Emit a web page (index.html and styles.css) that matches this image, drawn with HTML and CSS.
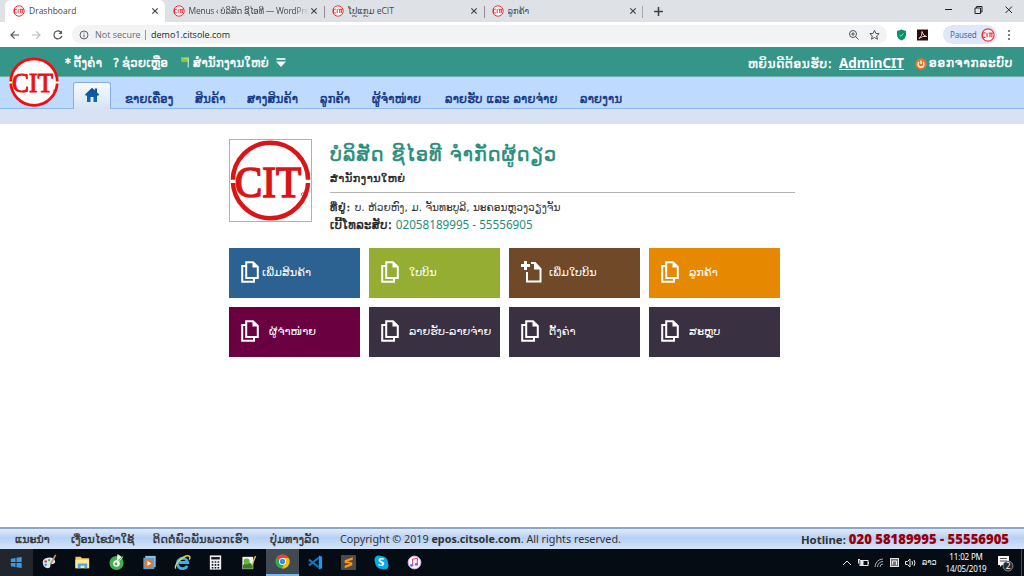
FILE: index.html
```html
<!DOCTYPE html>
<html lang="lo">
<head>
<meta charset="utf-8">
<title>Drashboard</title>
<link rel="stylesheet" href="styles.css">
</head>
<body>
<svg class="defs" width="0" height="0">
  <symbol id="cit" viewBox="0 0 100 100">
    <circle cx="50" cy="50" r="46.5" fill="#fff" stroke="currentColor" stroke-width="5.500"/>
    <path d="M0 51H100" stroke="#fff" stroke-width="4"/>
    <text x="6" y="70" textLength="82" lengthAdjust="spacingAndGlyphs" class="cit-text">CIT</text>
    <circle cx="90" cy="67" r="1.8" fill="none" stroke="currentColor"/>
  </symbol>
  <symbol id="fav" viewBox="0 0 12 12">
    <circle cx="6" cy="6" r="5.2" fill="#fff" stroke="#f03036" stroke-width="1"/>
    <path d="M3.9 4.2H1.5V8H3.9M5.2 4.2V8M6.5 4.3H10.7M7.7 4.3V8M9.3 4.3V8" fill="none" stroke="#f03036"/>
  </symbol>
  <symbol id="x" viewBox="0 0 8 8"><path d="M1.3 1.3L6.7 6.7M6.7 1.3L1.3 6.7" stroke="#42464b" stroke-width="1.2"/></symbol>
  <symbol id="pages" viewBox="0 0 18 22">
    <path d="M5.2 1.2H12L16.8 6V17H5.2Z" fill="none" stroke="#fff" stroke-width="2"/>
    <path d="M11.5 1V6.5H17Z" fill="#fff"/>
    <path d="M5 5H1.2V20.800H13V17" fill="none" stroke="#fff" stroke-width="2"/>
  </symbol>
  <symbol id="addpage" viewBox="0 0 22 22">
    <path d="M0 4.5H9M4.5 0V9" stroke="#fff" stroke-width="3"/>
    <path d="M6 11V20.5H19.5V8L14 2H10" fill="none" stroke="#fff" stroke-width="2"/>
    <path d="M13 1V8.5H20.5Z" fill="#fff"/>
  </symbol>
</svg>

<header class="tabs">
  <div class="tab active"><svg class="fav"><use href="#fav"/></svg><span>Drashboard</span><svg class="x"><use href="#x"/></svg></div>
  <div class="tab"><svg class="fav"><use href="#fav"/></svg><span class="fade">Menus ‹ ບໍລິສັດ ຊີໄອທີ — WordPres</span><svg class="x"><use href="#x"/></svg></div>
  <div class="tab sep"><svg class="fav"><use href="#fav"/></svg><span>ໂປຼແກຼມ eCIT</span><svg class="x"><use href="#x"/></svg></div>
  <div class="tab sep last"><svg class="fav"><use href="#fav"/></svg><span>ລູກຄ້າ</span><svg class="x"><use href="#x"/></svg></div>
  <svg class="plus" viewBox="0 0 10 10"><path d="M5 1V9M1 5H9" stroke="#3c4043" stroke-width="1.4"/></svg>
  <svg class="win" viewBox="0 0 70 12"><g fill="none" stroke="#222" stroke-width="1"><path d="M1 5.5H8M31 4H36.5V9.500H31ZM32.500 4V2.500H38V8H36.500M61.500 2.500L68 9M68 2.500L61.500 9"/></g></svg>
</header>

<div class="toolbar">
  <svg class="navicons" viewBox="0 0 60 14"><g fill="none" stroke-width="1.2"><path d="M9 7H1M4.700 3.300L1 7L4.700 10.700" stroke="#505458"/><path d="M22 7H30M26.300 3.300L30 7L26.300 10.700" stroke="#bcbfc3"/><path d="M51.200 4.500A4 4 0 1 0 51.800 8" stroke="#505458"/><path d="M52 2.500V6H48.500Z" fill="#505458"/></g></svg>
  <div class="omnibox">
    <svg class="info" viewBox="0 0 10 10"><circle cx="5" cy="5" r="4" fill="none" stroke="#5f6368"/><path d="M5 2.500V3.500M5 4.500V7.500" stroke="#5f6368"/></svg>
    <span class="notsecure">Not secure</span><i></i><span class="url">demo1.citsole.com</span>
    <svg class="omniicons" viewBox="0 0 34 12"><g fill="none" stroke="#505458" stroke-width="1"><circle cx="5" cy="5" r="3.500"/><path d="M7.600 7.600L10.500 10.500M3.200 5H6.800M5 3.200V6.800"/><path d="M26.500 1.300L27.900 4.400L31.200 4.700L28.700 6.900L29.500 10.200L26.500 8.500L23.500 10.200L24.300 6.900L21.800 4.700L25.100 4.400Z"/></g></svg>
  </div>
  <svg class="ext" viewBox="0 0 34 14"><path d="M6.500 1.500L11 3V7Q10.500 11 6.500 12.500Q2.500 11 2 7V3Z" fill="#0b8f6c"/><path d="M4.500 7L6 8.300L8.500 5.500" fill="none" stroke="#7fe8c6"/><rect x="22" y="1.500" width="11" height="11" fill="#2b0b0b"/><path d="M24 10.500Q27.500 8 27 3.500Q28 8 31.500 8.500Q28 7.500 24 10.500" fill="none" stroke="#f3dede" stroke-width=".9"/></svg>
  <div class="profile"><span>Paused</span><svg><use href="#fav"/></svg></div>
  <svg class="dots" viewBox="0 0 4 12"><g fill="#505458"><circle cx="2" cy="2" r="1"/><circle cx="2" cy="6" r="1"/><circle cx="2" cy="10" r="1"/></g></svg>
</div>

<div class="apphead">
  <div class="topbar">
    <div class="toplinks">
      <span class="t1">*&thinsp;ຕັ້ງຄ່າ</span>
      <span class="t2">?&thinsp;ຊ່ວຍເຫຼືອ</span>
      <svg class="flag" viewBox="0 0 10 14"><path d="M0 1H8V6H4L1 6Z" fill="#b8e04e"/><path d="M0 1L5 3L8 1V6H1Z" fill="#8fc93a"/><path d="M8 1V12" stroke="#d7e6df" stroke-width="1.200"/></svg>
      <span class="t3">ສໍານັກງານໃຫຍ່</span>
      <svg class="drop" viewBox="0 0 10 10"><path d="M.5 1H9.500" stroke="#fff" stroke-width="1.600"/><path d="M0 3.500H10L5 9Z" fill="#fff"/></svg>
    </div>
    <div class="user">
      <span class="welcome">ຫຍິນດີຕ້ອນຮັບ:</span><a>AdminCIT</a>
      <svg class="power" viewBox="0 0 12 12"><circle cx="6" cy="6" r="5.700" fill="#ee7424"/><path d="M4 4A3 3 0 1 0 8 4M6 2.500V6" fill="none" stroke="#fff" stroke-width="1.300"/></svg>
      <span class="logout">ອອກຈາກລະບົບ</span>
    </div>
  </div>
  <nav class="menu">
    <div class="home"><svg viewBox="0 0 16 16"><defs><linearGradient id="hg" x2="0" y2="1"><stop stop-color="#0a4d94"/><stop offset="1" stop-color="#1467b8"/></linearGradient></defs><path d="M1 7.500L8 .8L10.800 3.400V1.500H13V5.500L15.200 7.500L14 9L13 8.200V15H9.500V10H6.500V15H3V8.200L2 9Z" fill="url(#hg)"/></svg></div>
    <span class="m1">ຂາຍເຄື່ອງ</span><span class="m2">ສິນຄ້າ</span><span class="m3">ສາງສິນຄ້າ</span><span class="m4">ລູກຄ້າ</span><span class="m5">ຜູ້ຈໍາໜ່າຍ</span><span class="m6">ລາຍຮັບ ແລະ ລາຍຈ່າຍ</span><span class="m7">ລາຍງານ</span>
  </nav>
  <div class="substrip"></div>
  <svg class="logo"><use href="#cit"/></svg>
</div>

<main>
  <section class="company">
    <div class="biglogo"><svg><use href="#cit"/></svg></div>
    <div class="details">
      <h1>ບໍລິສັດ ຊີໄອທີ ຈໍາກັດຜູ້ດຽວ</h1>
      <h2>ສໍານັກງານໃຫຍ່</h2>
      <p class="addr"><b>ທີ່ຢູ່:</b> <span>ບ. ຫ້ວຍຫົງ, ມ. ຈັນທະບູລີ, ນະຄອນຫຼວງວຽງຈັນ</span></p>
      <p class="phone"><b>ເບີ້ໂທລະສັບ:</b> <span>02058189995 - 55556905</span></p>
    </div>
  </section>
  <section class="tiles">
    <div class="tile blue"><svg><use href="#pages"/></svg><span>ເພີ່ມສິນຄ້າ</span></div>
    <div class="tile green"><svg><use href="#pages"/></svg><span>ໃບບິນ</span></div>
    <div class="tile brown"><svg><use href="#addpage"/></svg><span>ເພີ່ມໃບບິນ</span></div>
    <div class="tile orange"><svg><use href="#pages"/></svg><span>ລູກຄ້າ</span></div>
    <div class="tile wine"><svg><use href="#pages"/></svg><span>ຜູ້ຈໍາໜ່າຍ</span></div>
    <div class="tile"><svg><use href="#pages"/></svg><span>ລາຍຮັບ-ລາຍຈ່າຍ</span></div>
    <div class="tile"><svg><use href="#pages"/></svg><span>ຕັ້ງຄ່າ</span></div>
    <div class="tile"><svg><use href="#pages"/></svg><span>ສະຫຼຸບ</span></div>
  </section>
</main>

<footer class="foot">
  <span class="f1">ແນະນໍາ</span><span class="f2">ເງື່ອນໄຂນໍາໃຊ້</span><span class="f3">ຕິດຕໍ່ພົວພັນພວກເຮົາ</span><span class="f4">ປຸ່ມທາງລັດ</span>
  <span class="copy">Copyright © 2019 <b>epos.citsole.com</b>. All rights reserved.</span>
  <span class="hot">Hotline: <b>020 58189995 - 55556905</b></span>
</footer>

<div class="taskbar">
  <div class="task start"><svg viewBox="0 0 18 18"><path d="M3 5L8 4.300V8.600H3ZM9 4.100L14.500 3.300V8.600H9ZM3 9.500H8V13.800L3 13ZM9 9.500H14.500V14.800L9 14Z" fill="#3a9ae8"/></svg></div>
  <div class="task"><svg viewBox="0 0 18 18"><path d="M2 10Q1 5 7 4Q14 3 15 8Q15 11 11 10.500Q9 11 10 13Q9 16 5 14.500Q2 13 2 10Z" fill="#d8e6ef"/><circle cx="5" cy="8" r="1.300" fill="#d33b32"/><circle cx="8.500" cy="6.500" r="1.200" fill="#4caf50"/><circle cx="5" cy="11.500" r="1.200" fill="#2d7bd4"/><path d="M15.500 1L10 11" stroke="#c98d58" stroke-width="1.800"/></svg></div>
  <div class="task"><svg viewBox="0 0 18 18"><path d="M1.500 3H7L8.500 4.500H16V15H1.500Z" fill="#f6cb55"/><path d="M1.500 6H16V15H1.500Z" fill="#ffe69a"/><path d="M4 15V10H14V15H11V12.500H7V15Z" fill="#4babe0"/></svg></div>
  <div class="task"><svg viewBox="0 0 18 18"><circle cx="9" cy="9.500" r="7.500" fill="#43ae51"/><path d="M9 9.500L10 0L16 4Z" fill="#e7f7e4"/><circle cx="9" cy="10" r="3.500" fill="#f5fff4"/><circle cx="8.500" cy="10.500" r="1.500" fill="#43ae51"/><path d="M11 7L16 2" stroke="#43ae51"/></svg></div>
  <div class="task"><svg viewBox="0 0 18 18"><rect x="4.500" y="2" width="11" height="12" fill="#8fc3e6"/><rect x="2.500" y="4" width="11.500" height="12" fill="#5d9fce"/><circle cx="8" cy="10" r="4.300" fill="#ef7622"/><path d="M6.800 7.500V12.500L11 10Z" fill="#fff"/></svg></div>
  <div class="task"><svg viewBox="0 0 18 18"><path d="M14 12.500A5.500 5.500 0 1 1 14.500 9H5.500" fill="none" stroke="#35b4ee" stroke-width="3"/><path d="M2 15.500Q0 13 5 7.500Q13 0 16.500 2.500Q17.500 4 16 6" fill="none" stroke="#f5cf3e" stroke-width="1.400"/></svg></div>
  <div class="task"><svg viewBox="0 0 18 18"><rect x="3" y="1.500" width="12" height="15" fill="#f0f0f0"/><path d="M4.500 4.500H13.500" stroke="#101820" stroke-width="2.500"/><path d="M5 8.500H13M5 11.500H13M5 14.500H13" stroke="#101820" stroke-width="1.700" stroke-dasharray="1.700 1.400"/></svg></div>
  <div class="task"><svg viewBox="0 0 18 18"><path d="M2.500 3H14V16H2.500Z" fill="#f3f4ed"/><path d="M3 12L7 8L13.500 11V15.500H3Z" fill="#377d28"/><circle cx="7" cy="8" r="3.200" fill="#67b53b"/><path d="M16.500 2L12.500 12" stroke="#e0c25d" stroke-width="1.500"/></svg></div>
  <div class="task current"><svg viewBox="0 0 18 18"><circle cx="9" cy="9" r="7.500" fill="#34a853"/><path d="M9 9L2.500 5.200A7.500 7.500 0 0 1 15.500 5.300L9 5.400Z" fill="#ea4335"/><path d="M9 9H12L8.500 16.500A7.500 7.500 0 0 0 15.500 5.300H9Z" fill="#fbbc05"/><circle cx="9" cy="9" r="3.700" fill="#fff"/><circle cx="9" cy="9" r="2.800" fill="#4285f4"/></svg></div>
  <div class="task"><svg viewBox="0 0 18 18"><path d="M12.500 1.500L16 3V15L12.500 16.500Z" fill="#2299e6"/><path d="M2 6L12.500 14M2 12L12.500 4" stroke="#087bc7" stroke-width="2.200"/></svg></div>
  <div class="task"><svg viewBox="0 0 18 18"><rect x="1" y="1" width="16" height="16" rx="1" fill="#4b4b4b"/><path d="M13.500 3.500L5 6.500V9.500L11 10L5 12.500V15L13 12V9L7.500 8L13.500 6Z" fill="#ff9914"/></svg></div>
  <div class="task"><svg viewBox="0 0 18 18"><circle cx="9" cy="9" r="6.800" fill="#08a9e8"/><circle cx="6" cy="6" r="4.500" fill="#08a9e8"/><circle cx="12" cy="12" r="4.500" fill="#08a9e8"/><text x="5.300" y="13.200" class="skype">S</text></svg></div>
  <div class="task"><svg viewBox="0 0 18 18"><circle cx="9" cy="9" r="6.800" fill="#fff" stroke="#cfadf0"/><path d="M7 12V5.500L12 4.500V11" fill="none" stroke="#e84f91" stroke-width="1.300"/><ellipse cx="6" cy="12" rx="1.800" ry="1.400" fill="#6379ee"/><ellipse cx="11" cy="11" rx="1.800" ry="1.400" fill="#a45cda"/></svg></div>
  <div class="tray">
    <svg viewBox="0 0 80 16"><g fill="none" stroke="#e4e6e8" stroke-width="1"><path d="M1 10L5 6L9 10"/><rect x="18" y="5.500" width="8" height="5"/><path d="M19 6H21V10H19ZM26.500 7V9M16 4.500H18M16.500 4V8.500" fill="#e4e6e8"/><path d="M33 12A8 8 0 0 1 41 4M35.500 12A5.500 5.500 0 0 1 41 6.500M38 12A3 3 0 0 1 41 9" stroke="#a8acb0"/><rect x="48.500" y="3.500" width="8" height="8" fill="#777"/><path d="M50.500 9.500V6H54.500V10"/><path d="M63.500 6.500H65.500L68 4V12L65.500 9.500H63.500ZM70 6Q71 8 70 10M72 5Q74 8 72 11"/></g></svg>
    <span class="lang">ລາວ</span>
    <div class="clock"><span>11:02 PM</span><span>14/05/2019</span></div>
    <svg class="notice" viewBox="0 0 18 20"><path d="M2 3H13V12H6L4 14V12H2Z" fill="#f5f5f5"/><path d="M4 5.500H11M4 8H11" stroke="#555"/><circle cx="12" cy="13" r="5" fill="#292d32" stroke="#aaa" stroke-width=".7"/><text x="9.700" y="16.200" class="badge">2</text></svg>
    <i></i>
  </div>
</div>
</body>
</html>
```

FILE: styles.css
```css
* { box-sizing: border-box; margin: 0; padding: 0; }
body { width: 1024px; height: 576px; overflow: hidden; display: flex; flex-direction: column; background: #fff; color: #222; font: 12px "Noto Sans", "DejaVu Sans", sans-serif; white-space: nowrap; }
svg { flex: none; display: block; }
.defs { position: absolute; }
.cit-text { font: 54px "Liberation Serif", serif; fill: currentColor; stroke: currentColor; stroke-width: 2px; }

.tabs { height: 22px; flex: none; display: flex; align-items: center; padding-left: 5px; background: #dee1e6; font: 8.5px "Open Sans", "DejaVu Sans", sans-serif; color: #45484c; }
.tab { width: 159.5px; height: 22px; padding: 0 6px 0 8px; display: flex; align-items: center; border-radius: 6px 6px 0 0; }
.tab span { flex: 1; overflow: hidden; margin-left: 4px; line-height: 18px; }
.tab .fade { letter-spacing: -.25px; margin-right: -3px; -webkit-mask-image: linear-gradient(90deg, #000 88%, transparent); mask-image: linear-gradient(90deg, #000 88%, transparent); }
.active { background: #fff; }
.sep { background: linear-gradient(#8c9095, #8c9095) 0 6px / 1px 12px no-repeat; }
.last { background: linear-gradient(#8c9095, #8c9095) 0 6px / 1px 12px no-repeat, linear-gradient(#a5a8ac, #a5a8ac) 100% 6px / 1px 12px no-repeat; }
.fav { width: 12px; height: 12px; }
.x { width: 8px; height: 8px; margin-left: 4px; }
.plus { width: 11px; height: 11px; margin-left: 10px; }
.win { width: 70px; height: 12px; margin: 0 10px 3px auto; }

.toolbar { height: 25px; flex: none; display: flex; align-items: center; background: #fff; padding-left: 10px; }
.navicons { width: 60px; height: 14px; }
.omnibox { width: 815px; height: 19px; margin-left: 2px; background: #f1f3f4; border-radius: 10px; display: flex; align-items: center; padding: 0 8px 0 7px; font: 9px "Open Sans", sans-serif; }
.info { width: 10px; height: 10px; }
.notsecure { color: #686c70; margin-left: 6px; width: 45px; }
.omnibox i { width: 1px; height: 10px; background: #999; margin: 0 5px 0 5px; }
.url { color: #26292c; }
.omniicons { width: 34px; height: 12px; margin-left: auto; margin-right: -3px; }
.ext { width: 34px; height: 14px; margin-left: 8px; }
.profile { width: 54px; height: 19px; margin-left: 14px; border-radius: 10px; background: #dfe8fb; color: #4169b5; font: 8px "Noto Sans", sans-serif; letter-spacing: -.15px; display: flex; align-items: center; justify-content: space-between; padding: 0 2px 0 7px; }
.profile svg { width: 14px; height: 14px; }
.dots { width: 4px; height: 12px; margin-left: 10px; }

.apphead { position: relative; height: 77px; flex: none; }
.topbar { height: 30px; background: #359588; border-bottom: 1px solid #72afa7; color: #fff; display: flex; justify-content: space-between; font: 11.5px "DejaVu Sans", sans-serif; -webkit-text-stroke: .45px; }
.toplinks, .user { display: flex; align-items: center; padding-top: 2px; }
.toplinks { padding-left: 65px; letter-spacing: .35px; }
.t1 { width: 48px; }
.t2 { width: 68px; }
.t3 { margin-left: 3px; width: 83px; }
.flag { width: 9px; height: 14px; }
.drop { width: 10px; height: 10px; }
.user { padding-right: 11px; }
.user .welcome { width: 87px; margin-right: 4px; padding-top: 3px; font-size: 12px; letter-spacing: .75px; }
.user a { width: 65px; text-decoration: underline; font: bold 13.4px "Noto Sans", sans-serif; -webkit-text-stroke: 0; }
.power { width: 12px; height: 12px; margin: 2px 2px 0 11px; }
.logout { width: 84px; font-size: 12px; letter-spacing: .85px; }
.menu { height: 32px; display: flex; align-items: flex-end; padding-left: 73px; background: #bfdaff; border-bottom: 1px solid #8fb8ea; color: #123680; font: 11.5px "DejaVu Sans", sans-serif; letter-spacing: .22px; -webkit-text-stroke: .45px; }
.menu span { height: 19px; line-height: 20px; }
.home { width: 38px; height: 27px; margin: 0 14px -1px 0; padding: 4px 0 0 10px; border: 1px solid #86aee0; border-bottom: 0; border-radius: 3px 3px 0 0; background: linear-gradient(#f6faff, #d7e3f3); }
.home svg { width: 16px; height: 16px; }
.m1 { width: 70px; }
.m2 { width: 52px; }
.m3 { width: 73px; }
.m4 { width: 52px; }
.m5 { width: 73px; }
.m6 { width: 135px; }
.substrip { height: 15px; background: #d7e3f3; }
.logo { position: absolute; left: 9px; top: 10px; width: 50px; height: 50px; color: #f10d10; }

main { flex: 1; padding: 15px 0 0 229px; }
.company { display: flex; height: 109px; }
.biglogo { width: 83px; height: 83px; border: 1px solid #91b5e4; margin-right: 18px; }
.biglogo svg { width: 81px; height: 81px; color: #d91518; }
.details { width: 465px; }
h1 { height: 32px; font: 19px/30px "DejaVu Sans", sans-serif; letter-spacing: 1.05px; color: #288c7b; -webkit-text-stroke: .5px; }
h2 { height: 22px; border-bottom: 1px solid #b3b3b3; font: 11.2px/16px "DejaVu Sans", sans-serif; letter-spacing: .5px; -webkit-text-stroke: .4px; }
.addr, .phone { height: 18px; font: 11px/18px "DejaVu Sans", sans-serif; }
.addr b, .phone b { font-weight: normal; -webkit-text-stroke: .4px; }
.addr b { letter-spacing: .9px; }
.phone b { font-size: 11.5px; letter-spacing: .45px; }
.addr { margin-top: 5px; }
.addr span { font-size: 10.6px; color: #333; }
.phone span { color: #288c7b; font: 11.7px "Noto Sans", sans-serif; }
.tiles { display: grid; grid-template-columns: repeat(4, 131px); gap: 9px; }
.tile { height: 50px; background: #393042; color: #fff; display: flex; align-items: center; padding: 0 0 2px 12px; font: 11.3px "DejaVu Sans", sans-serif; }
.tile svg { width: 18px; height: 22px; }
.tile span { margin-left: 10px; }
.tile.blue { background: #2b6291; }
.tile.blue span { margin-left: 3px; }
.tile.green { background: #95ad32; }
.tile.brown { background: #704928; }
.tile.brown svg { width: 22px; }
.tile.brown span { margin-left: 6px; }
.tile.orange { background: #e68900; }
.tile.wine { background: #6a003f; }

.foot { height: 22px; flex: none; border-top: 2px solid #8ba7cd; background: linear-gradient(#e0ebfb, #b7d0f3 45%, #d5e4fa); display: flex; align-items: center; padding: 0 15px; font: 11px "DejaVu Sans", sans-serif; color: #333; -webkit-text-stroke: .35px; }
.f1 { width: 56px; }
.f2 { width: 82px; }
.f3 { width: 117px; letter-spacing: .45px; }
.f4 { width: 70px; letter-spacing: .25px; }
.copy { font: 10.75px "Noto Sans", sans-serif; -webkit-text-stroke: 0; }
.hot { margin-left: auto; font: bold 11.4px "Noto Sans", sans-serif; -webkit-text-stroke: 0; }
.hot b { color: #980009; font-size: 13.1px; }

.taskbar { height: 27px; flex: none; display: flex; background: #050c13; color: #fff; }
.task { width: 33.2px; display: flex; align-items: center; justify-content: center; }
.task svg { width: 17px; height: 17px; }
.start { background: #20262b; }
.current { background: #414951; border-bottom: 2px solid #75b8ed; }
.skype { font: bold 12px "Open Sans", sans-serif; fill: #fff; }
.tray { margin-left: auto; display: flex; align-items: center; }
.tray > svg { width: 80px; height: 16px; }
.lang { width: 24px; font: 8px "DejaVu Sans", sans-serif; }
.clock { width: 40px; display: flex; flex-direction: column; align-items: center; font: 8px/12px "Noto Sans", sans-serif; letter-spacing: -.15px; }
.tray .notice { width: 18px; height: 20px; margin-left: 10px; }
.badge { font: 8.5px "Open Sans", sans-serif; fill: #fff; }
.tray i { width: 1px; height: 27px; margin-left: 7px; margin-right: 2px; background: #4a4e52; }
```
